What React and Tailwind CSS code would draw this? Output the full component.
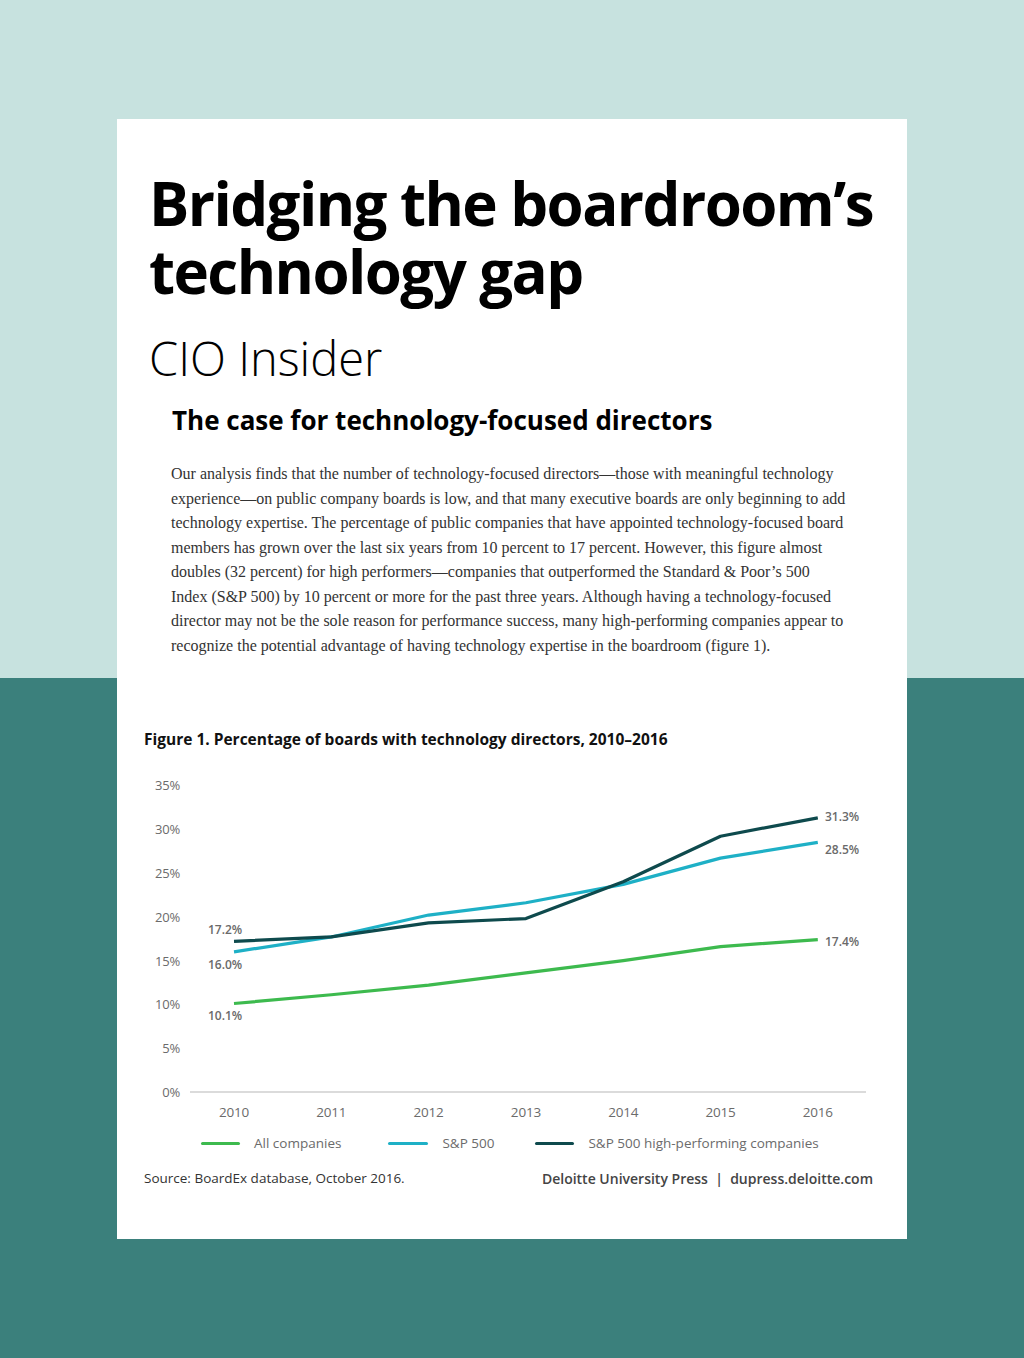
const years = [2010, 2011, 2012, 2013, 2014, 2015, 2016]

const series = [
  { name: 'All companies', color: '#3dba4e', values: [10.1, 11.1, 12.2, 13.6, 15.0, 16.6, 17.4] },
  { name: 'S&P 500', color: '#1eb0c6', values: [16.0, 17.7, 20.2, 21.6, 23.7, 26.7, 28.5] },
  { name: 'S&P 500 high-performing companies', color: '#0e4a4d', values: [17.2, 17.7, 19.3, 19.8, 24.0, 29.2, 31.3] },
]

// page coordinates (viewBox is offset so numbers match the screenshot)
const xFor = (i) => 234 + i * 97.3
const yFor = (v) => 1090 - v * 8.76

const paragraph = [
  'Our analysis finds that the number of technology-focused directors—those with meaningful technology',
  'experience—on public company boards is low, and that many executive boards are only beginning to add',
  'technology expertise. The percentage of public companies that have appointed technology-focused board',
  'members has grown over the last six years from 10 percent to 17 percent. However, this figure almost',
  'doubles (32 percent) for high performers—companies that outperformed the Standard & Poor’s 500',
  'Index (S&P 500) by 10 percent or more for the past three years. Although having a technology-focused',
  'director may not be the sole reason for performance success, many high-performing companies appear to',
  'recognize the potential advantage of having technology expertise in the boardroom (figure 1).',
]

const LineChart = () => {
  return (
    <svg width="790" height="370" viewBox="117 768 790 370" className="block">
      {[0, 5, 10, 15, 20, 25, 30, 35].map((t) => (
        <text
          key={t}
          x="180"
          y={yFor(t) + 5}
          textAnchor="end"
          fontSize="13"
          fill="#6b6b6b"
          fontFamily="'Open Sans', sans-serif"
          letterSpacing="-0.2"
        >
          {t}%
        </text>
      ))}
      <line x1="190" y1="1090" x2="866" y2="1090" stroke="#cfcfcf" strokeWidth="1.5" />
      {years.map((y, i) => (
        <text
          key={y}
          x={xFor(i)}
          y="1115"
          textAnchor="middle"
          fontSize="13.5"
          fill="#6b6b6b"
          fontFamily="'Open Sans', sans-serif"
          letterSpacing="-0.2"
        >
          {y}
        </text>
      ))}
      {series.map((s) => (
        <polyline
          key={s.name}
          points={s.values.map((v, i) => `${xFor(i)},${yFor(v)}`).join(' ')}
          fill="none"
          stroke={s.color}
          strokeWidth="3.2"
          strokeLinejoin="round"
        />
      ))}
      {[
        ['17.2%', 208, 932],
        ['16.0%', 208, 967],
        ['10.1%', 208, 1018],
        ['31.3%', 825, 819],
        ['28.5%', 825, 852],
        ['17.4%', 825, 944],
      ].map(([label, x, y]) => (
        <text
          key={label}
          x={x}
          y={y}
          fontSize="12"
          fontWeight="600"
          fill="#6a6a6a"
          fontFamily="'Open Sans', sans-serif"
        >
          {label}
        </text>
      ))}
    </svg>
  )
}

const App = () => {
  return (
    <div
      className="min-h-[1358px] pt-[119px] pb-[119px] bg-[linear-gradient(to_bottom,#c7e2df_678px,#3b807c_678px)]"
      style={{ fontFamily: "'Open Sans', sans-serif" }}
    >
      <div className="ml-[117px] w-[790px] h-[1120px] bg-white">
        {/* Heading */}
        <div className="pl-[32px] pt-[50px]">
          <h1 className="text-[60px] leading-[68px] font-bold text-black tracking-[-0.026em]">
            Bridging the boardroom’s
            <br />
            technology gap
          </h1>
          <p className="mt-[26px] text-[47px] leading-[54px] font-light text-black">
            CIO Insider
          </p>
        </div>

        <h2 className="mt-[18px] pl-[55px] text-[26px] leading-[34px] font-bold text-black">
          The case for technology-focused directors
        </h2>

        {/* Body */}
        <div
          className="mt-[25px] pl-[54px] text-[16px] leading-[24.5px] text-[#333] whitespace-nowrap"
          style={{ fontFamily: "'Liberation Serif', serif" }}
        >
          {paragraph.map((line) => (
            <div key={line}>{line}</div>
          ))}
        </div>

        {/* Figure */}
        <p className="mt-[71px] pl-[27px] text-[15.5px] leading-[20px] font-bold text-[#111]">
          Figure 1. Percentage of boards with technology directors, 2010–2016
        </p>

        <div className="mt-[21px]">
          <LineChart />
        </div>

        {/* Legend */}
        <div className="-mt-[6px] flex items-center text-[13.5px] leading-[18px] text-[#6b6b6b]">
          <div className="ml-[84px] flex items-center">
            <span className="w-[39px] h-[3px] rounded-full bg-[#3dba4e]" />
            <span className="ml-[14px]">All companies</span>
          </div>
          <div className="ml-[47px] flex items-center">
            <span className="w-[40px] h-[3px] rounded-full bg-[#1eb0c6]" />
            <span className="ml-[14px]">S&amp;P 500</span>
          </div>
          <div className="ml-[41px] flex items-center">
            <span className="w-[39px] h-[3px] rounded-full bg-[#0e4a4d]" />
            <span className="ml-[14px]">S&amp;P 500 high-performing companies</span>
          </div>
        </div>

        {/* Footer */}
        <div className="mt-[16px] pl-[27px] pr-[34px] flex items-center justify-between">
          <span className="text-[13.5px] text-[#333]">Source: BoardEx database, October 2016.</span>
          <span className="text-[14px] font-semibold text-[#444]">
            Deloitte University Press&nbsp;&nbsp;|&nbsp;&nbsp;dupress.deloitte.com
          </span>
        </div>
      </div>
    </div>
  )
}

export default App
